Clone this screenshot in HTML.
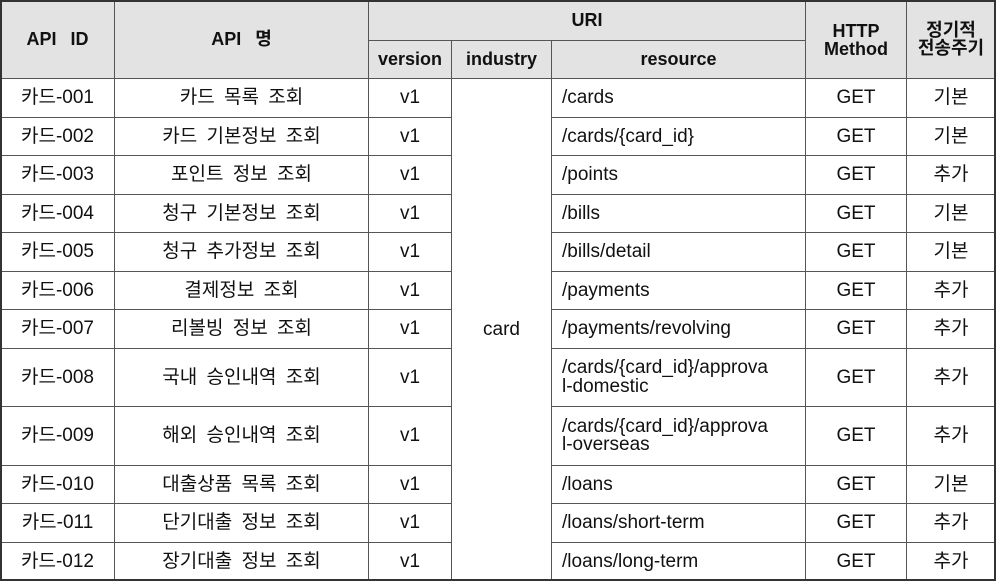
<!DOCTYPE html>
<html><head><meta charset="utf-8"><style>
body{margin:0;background:#fff;width:996px;height:581px;overflow:hidden;position:relative;font-family:"Liberation Sans","Noto Sans CJK KR",sans-serif;font-size:19px;color:#111}
.c{position:absolute;box-sizing:border-box;border:1px solid #555;display:flex;align-items:center;justify-content:center;text-align:center;line-height:1.05;word-spacing:4px}
.h{background:#e3e3e3;font-weight:bold;font-size:18px;word-spacing:2px}
.l{justify-content:flex-start;text-align:left;padding-left:10px;word-spacing:0}
.f{position:absolute;left:0;top:0;width:996px;height:581px;box-sizing:border-box;border:2px solid #333;border-right-width:2px;pointer-events:none}
</style></head><body>
<div class="c h" style="left:0;top:0;width:115px;height:79px">API&nbsp; ID</div>
<div class="c h" style="left:114px;top:0;width:255px;height:79px">API&nbsp; 명</div>
<div class="c h" style="left:368px;top:0;width:438px;height:41px">URI</div>
<div class="c h" style="left:368px;top:40px;width:84px;height:39px">version</div>
<div class="c h" style="left:451px;top:40px;width:101px;height:39px">industry</div>
<div class="c h" style="left:551px;top:40px;width:255px;height:39px">resource</div>
<div class="c h" style="left:805px;top:0;width:102px;height:79px;line-height:1">HTTP<br>Method</div>
<div class="c h" style="left:906px;top:0;width:90px;height:79px;line-height:0.95;word-spacing:0">정기적<br>전송주기</div>
<div class="c" style="left:451px;top:78px;width:101px;height:503px">card</div>

<div class="c" style="left:0;top:78px;width:115px;height:40px">카드-001</div><div class="c" style="left:114px;top:78px;width:255px;height:40px">카드 목록 조회</div><div class="c" style="left:368px;top:78px;width:84px;height:40px">v1</div><div class="c l" style="left:551px;top:78px;width:255px;height:40px">/cards</div><div class="c" style="left:805px;top:78px;width:102px;height:40px">GET</div><div class="c" style="left:906px;top:78px;width:90px;height:40px">기본</div>
<div class="c" style="left:0;top:117px;width:115px;height:39px">카드-002</div><div class="c" style="left:114px;top:117px;width:255px;height:39px">카드 기본정보 조회</div><div class="c" style="left:368px;top:117px;width:84px;height:39px">v1</div><div class="c l" style="left:551px;top:117px;width:255px;height:39px">/cards/{card_id}</div><div class="c" style="left:805px;top:117px;width:102px;height:39px">GET</div><div class="c" style="left:906px;top:117px;width:90px;height:39px">기본</div>
<div class="c" style="left:0;top:155px;width:115px;height:40px">카드-003</div><div class="c" style="left:114px;top:155px;width:255px;height:40px">포인트 정보 조회</div><div class="c" style="left:368px;top:155px;width:84px;height:40px">v1</div><div class="c l" style="left:551px;top:155px;width:255px;height:40px">/points</div><div class="c" style="left:805px;top:155px;width:102px;height:40px">GET</div><div class="c" style="left:906px;top:155px;width:90px;height:40px">추가</div>
<div class="c" style="left:0;top:194px;width:115px;height:39px">카드-004</div><div class="c" style="left:114px;top:194px;width:255px;height:39px">청구 기본정보 조회</div><div class="c" style="left:368px;top:194px;width:84px;height:39px">v1</div><div class="c l" style="left:551px;top:194px;width:255px;height:39px">/bills</div><div class="c" style="left:805px;top:194px;width:102px;height:39px">GET</div><div class="c" style="left:906px;top:194px;width:90px;height:39px">기본</div>
<div class="c" style="left:0;top:232px;width:115px;height:40px">카드-005</div><div class="c" style="left:114px;top:232px;width:255px;height:40px">청구 추가정보 조회</div><div class="c" style="left:368px;top:232px;width:84px;height:40px">v1</div><div class="c l" style="left:551px;top:232px;width:255px;height:40px">/bills/detail</div><div class="c" style="left:805px;top:232px;width:102px;height:40px">GET</div><div class="c" style="left:906px;top:232px;width:90px;height:40px">기본</div>
<div class="c" style="left:0;top:271px;width:115px;height:39px">카드-006</div><div class="c" style="left:114px;top:271px;width:255px;height:39px">결제정보 조회</div><div class="c" style="left:368px;top:271px;width:84px;height:39px">v1</div><div class="c l" style="left:551px;top:271px;width:255px;height:39px">/payments</div><div class="c" style="left:805px;top:271px;width:102px;height:39px">GET</div><div class="c" style="left:906px;top:271px;width:90px;height:39px">추가</div>
<div class="c" style="left:0;top:309px;width:115px;height:40px">카드-007</div><div class="c" style="left:114px;top:309px;width:255px;height:40px">리볼빙 정보 조회</div><div class="c" style="left:368px;top:309px;width:84px;height:40px">v1</div><div class="c l" style="left:551px;top:309px;width:255px;height:40px">/payments/revolving</div><div class="c" style="left:805px;top:309px;width:102px;height:40px">GET</div><div class="c" style="left:906px;top:309px;width:90px;height:40px">추가</div>
<div class="c" style="left:0;top:348px;width:115px;height:59px">카드-008</div><div class="c" style="left:114px;top:348px;width:255px;height:59px">국내 승인내역 조회</div><div class="c" style="left:368px;top:348px;width:84px;height:59px">v1</div><div class="c l" style="left:551px;top:348px;width:255px;height:59px;line-height:0.95">/cards/{card_id}/approva<br>l-domestic</div><div class="c" style="left:805px;top:348px;width:102px;height:59px">GET</div><div class="c" style="left:906px;top:348px;width:90px;height:59px">추가</div>
<div class="c" style="left:0;top:406px;width:115px;height:60px">카드-009</div><div class="c" style="left:114px;top:406px;width:255px;height:60px">해외 승인내역 조회</div><div class="c" style="left:368px;top:406px;width:84px;height:60px">v1</div><div class="c l" style="left:551px;top:406px;width:255px;height:60px;line-height:0.95">/cards/{card_id}/approva<br>l-overseas</div><div class="c" style="left:805px;top:406px;width:102px;height:60px">GET</div><div class="c" style="left:906px;top:406px;width:90px;height:60px">추가</div>
<div class="c" style="left:0;top:465px;width:115px;height:39px">카드-010</div><div class="c" style="left:114px;top:465px;width:255px;height:39px">대출상품 목록 조회</div><div class="c" style="left:368px;top:465px;width:84px;height:39px">v1</div><div class="c l" style="left:551px;top:465px;width:255px;height:39px">/loans</div><div class="c" style="left:805px;top:465px;width:102px;height:39px">GET</div><div class="c" style="left:906px;top:465px;width:90px;height:39px">기본</div>
<div class="c" style="left:0;top:503px;width:115px;height:40px">카드-011</div><div class="c" style="left:114px;top:503px;width:255px;height:40px">단기대출 정보 조회</div><div class="c" style="left:368px;top:503px;width:84px;height:40px">v1</div><div class="c l" style="left:551px;top:503px;width:255px;height:40px">/loans/short-term</div><div class="c" style="left:805px;top:503px;width:102px;height:40px">GET</div><div class="c" style="left:906px;top:503px;width:90px;height:40px">추가</div>
<div class="c" style="left:0;top:542px;width:115px;height:39px">카드-012</div><div class="c" style="left:114px;top:542px;width:255px;height:39px">장기대출 정보 조회</div><div class="c" style="left:368px;top:542px;width:84px;height:39px">v1</div><div class="c l" style="left:551px;top:542px;width:255px;height:39px">/loans/long-term</div><div class="c" style="left:805px;top:542px;width:102px;height:39px">GET</div><div class="c" style="left:906px;top:542px;width:90px;height:39px">추가</div>
<div class="f"></div>
</body></html>
